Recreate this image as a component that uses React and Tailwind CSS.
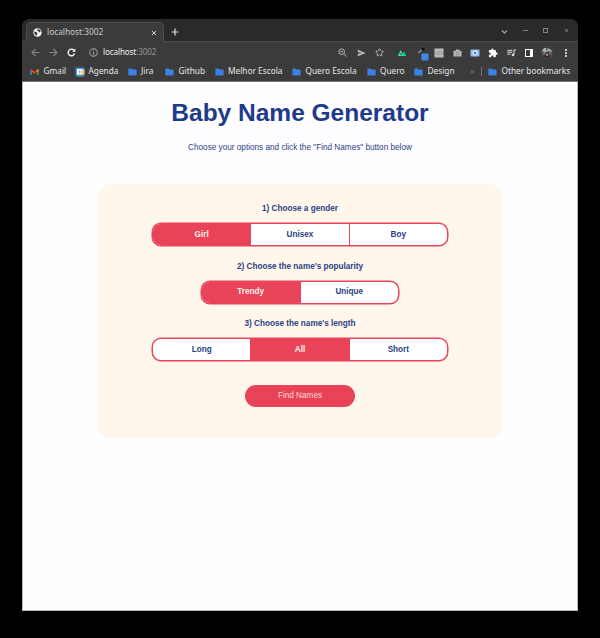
import { Star } from "lucide-react";

const ui = { fill: "none", stroke: "currentColor", strokeWidth: 1.2 };

function Folder() {
  return (
    <svg className="h-[8px] w-[9px]" viewBox="0 0 9 8">
      <path d="M.4 1.3Q.4.5 1.2.5H3.5L4.5 1.4H7.8Q8.6 1.4 8.6 2.2V6.7Q8.6 7.5 7.8 7.5H1.2Q.4 7.5.4 6.7Z" fill="#3b82e8" />
    </svg>
  );
}

function GmailIcon() {
  return (
    <svg className="h-[8px] w-[9px]" viewBox="0 0 9 8">
      <path d="M1.2 7V2" stroke="#4285f4" strokeWidth="1.5" />
      <path d="M7.8 7V2" stroke="#34a853" strokeWidth="1.5" />
      <path d="M.8 1.8L4.5 4.7L8.2 1.8" fill="none" stroke="#ea4335" strokeWidth="1.6" />
      <path d="M7.1 1.7L8.5 1.2V3.1L7.1 4Z" fill="#fbbc04" />
    </svg>
  );
}

function CalendarIcon() {
  return (
    <svg className="h-[10px] w-[10px]" viewBox="0 0 10 10">
      <rect x=".5" y=".5" width="9" height="9" rx="1" fill="#4285f4" />
      <path d="M7.5 2.5H9.5V7.5H7.5Z" fill="#fbbc04" />
      <path d="M2 7.5H7.5V9.5H2Z" fill="#34a853" />
      <path d="M7.5 7.5H9.5L7.5 9.5Z" fill="#ea4335" />
      <rect x="2" y="2" width="5.7" height="5.7" fill="#fff" />
      <path d="M3.5 3.6H4.5V6.5M5.5 3.8L6.2 3.5V6.5" fill="none" stroke="#4285f4" strokeWidth=".6" />
    </svg>
  );
}

function Slot({ children, className = "w-[18px]" }) {
  return <div className={`flex h-full shrink-0 items-center justify-center ${className}`}>{children}</div>;
}

function TabStrip() {
  return (
    <div className="flex h-[23px] shrink-0 items-end border-b border-[#4b4a4b] bg-[#2b2a2b] pl-[4px]">
      <div className="-mb-px flex h-[20px] w-[138px] shrink-0 items-center rounded-t-[5px] border border-b-0 border-[#4e4d4e] bg-[#3c3b3c] pl-[6px] pr-[6px]">
        <svg className="h-[9px] w-[9px] shrink-0" viewBox="0 0 9 9">
          <circle cx="4.5" cy="4.5" r="4.2" fill="#f2f2f2" />
          <path d="M1.1 3.6L3.5 4.1L4.4 5.2L3.8 7.7Q1.4 7 1.1 3.6ZM4.2 1.2L7 1.8L7.8 3.6L6 4.5L5.6 3.2L4.1 2.8Z" fill="#3c3b3c" />
        </svg>
        <span className="ml-[5px] flex-1 text-[8.3px] text-[#c9c9c9]">localhost:3002</span>
        <svg className="h-[6px] w-[6px] text-[#d4d4d4]" viewBox="0 0 6 6" {...ui} strokeWidth="1"><path d="M.8.8L5.2 5.2M5.2.8L.8 5.2" /></svg>
      </div>
      <svg className="mb-[5px] ml-[7px] h-[8px] w-[8px] text-[#dedede]" viewBox="0 0 8 8" {...ui}><path d="M4 .5V7.5M.5 4H7.5" /></svg>
      <div className="ml-auto flex h-full items-center pr-[2px] text-[#a0a0a0]">
        <Slot className="w-[22px]"><svg className="mt-[4px] h-[6px] w-[7px]" viewBox="0 0 7 6" {...ui} strokeWidth="1.3"><path d="M1 1.5L3.5 4L6 1.5" /></svg></Slot>
        <Slot className="w-[20px]"><div className="h-px w-[5px] bg-[#858585]" /></Slot>
        <Slot className="w-[21px]"><div className="h-[5px] w-[5px] border border-[#858585]" /></Slot>
        <Slot className="w-[20px]"><svg className="h-[5px] w-[5px]" viewBox="0 0 5 5" {...ui} strokeWidth=".7"><path d="M.7.7L4.3 4.3M4.3.7L.7 4.3" /></svg></Slot>
      </div>
    </div>
  );
}

function Toolbar() {
  return (
    <div className="flex h-[21px] shrink-0 items-center pl-[4px] pr-[3px] text-[#b8b8b8]">
      <Slot><svg className="h-[9px] w-[9px] text-[#858485]" viewBox="0 0 9 9" {...ui}><path d="M8.5 4.5H1M4.5 1L1 4.5L4.5 8" /></svg></Slot>
      <Slot><svg className="h-[9px] w-[9px] text-[#858485]" viewBox="0 0 9 9" {...ui}><path d="M.5 4.5H8M4.5 1L8 4.5L4.5 8" /></svg></Slot>
      <Slot><svg className="h-[9px] w-[9px] text-[#f2f2f2]" viewBox="0 0 9 9" {...ui} strokeWidth="1.4"><path d="M7.6 5.5A3.3 3.3 0 1 1 7 2.3" /><path d="M8.3.5V3.7H5.1Z" fill="currentColor" stroke="none" /></svg></Slot>
      <svg className="ml-[9px] h-[9px] w-[9px] text-[#a0a0a0]" viewBox="0 0 8 8" {...ui} strokeWidth=".9"><circle cx="4" cy="4" r="3.4" /><path d="M4 3.5V6M4 2V2.8" /></svg>
      <div className="ml-[5px] text-[8.1px] tracking-[-0.12px] text-[#eeeeee]">localhost<span className="text-[#979697]">:3002</span></div>
      <div className="ml-auto flex h-full items-center">
        <Slot className="w-[19px]"><svg className="h-[9px] w-[9px]" viewBox="0 0 9 9" {...ui} strokeWidth="1"><circle cx="3.7" cy="3.7" r="2.8" /><path d="M5.8 5.8L8.5 8.5M2.4 3.7H5" /></svg></Slot>
        <Slot><svg className="h-[8px] w-[9px]" viewBox="0 0 9 8"><path d="M.5.5L8.7 4L.5 7.5L1 4.8L5 4L1 3.2Z" fill="currentColor" /></svg></Slot>
        <Slot><Star className="h-[9px] w-[9px]" strokeWidth={2.5} /></Slot>
        <Slot className="w-[28px]">
          <svg className="h-[8px] w-[10px]" viewBox="0 0 10 8"><path d="M.8 6.9L3.8 1L6.6 6.9Z" fill="#4be0a7" /><path d="M4.2 6.9L6.8 2.4L9.4 6.9Z" fill="#00dc82" /><path d="M2.8 5.8L3.8 3.8L4.8 5.8Z" fill="#3c3b3c" /></svg>
        </Slot>
        <Slot className="w-[14px]">
          <svg className="h-[16px] w-[12px]" viewBox="0 0 12 16"><path d="M1.5 8L5 4.5" stroke="#8b9398" strokeWidth="1.4" /><path d="M4 4L6.5 2.5L8 4L6 6Z" fill="#111" /><rect x="4.5" y="8.5" width="7" height="7" rx="1" fill="#4287ed" /></svg>
        </Slot>
        <Slot><svg className="h-[10px] w-[10px]" viewBox="0 0 10 10"><rect x=".5" y=".5" width="9" height="9" fill="#bcbcbc" /><path d="M3.3 3.2L1.7 5L3.3 6.8M6.7 3.2L8.3 5L6.7 6.8M5.6 2.7L4.4 7.3" fill="none" stroke="#777" strokeWidth=".7" /></svg></Slot>
        <Slot><svg className="h-[8px] w-[9px]" viewBox="0 0 9 8"><path d="M.5 1.7H2.5L3.2.6H5.8L6.5 1.7H8.5V7.5H.5Z" fill="#b8b8b8" /><circle cx="4.5" cy="4.5" r="1.9" fill="#7e7e7e" /><circle cx="4.5" cy="4.5" r="1" fill="#d5d5d5" /></svg></Slot>
        <Slot><svg className="h-[8px] w-[10px]" viewBox="0 0 10 8"><rect x=".5" y=".5" width="9" height="7" rx="1" fill="#8bb8f8" /><circle cx="5" cy="4" r="2.5" fill="#eef5ff" /><path d="M5 2.6V5.4M3.6 4H6.4" stroke="#245fac" strokeWidth="1.1" /></svg></Slot>
        <Slot>
          <svg className="h-[10px] w-[10px] text-white" viewBox="0 0 24 24"><path d="M20.5 11H19V7a2 2 0 0 0-2-2h-4V3.5a2.5 2.5 0 0 0-5 0V5H4a2 2 0 0 0-2 2v3.8h1.5a2.7 2.7 0 0 1 0 5.4H2V20a2 2 0 0 0 2 2h3.8v-1.5a2.7 2.7 0 0 1 5.4 0V22H17a2 2 0 0 0 2-2v-4h1.5a2.5 2.5 0 0 0 0-5Z" fill="currentColor" /></svg>
        </Slot>
        <Slot><svg className="h-[8px] w-[9px] text-[#dedede]" viewBox="0 0 9 8" {...ui} strokeWidth="1"><path d="M.3 1.4H5.3M.3 3.3H5.3M.3 5.2H3.4M7 6V1H9" /><circle cx="5.9" cy="6" r="1.2" fill="currentColor" stroke="none" /></svg></Slot>
        <Slot><div className="h-[8px] w-[8px] border border-r-[3px] border-white" /></Slot>
        <Slot>
          <svg className="h-[12px] w-[12px]" viewBox="0 0 12 12"><circle cx="6" cy="6" r="5.6" fill="#555759" /><path d="M1 4L3 1H5V4L7 1.5L10 3L11 5L7 4L4 5.5Z" fill="#a9afb2" /><path d="M1 7L3 5.5L5 7L7 5L10 7L9 10L6 11.5L3 10Z" fill="#302d31" /><circle cx="3" cy="7" r="1" fill="#bd8781" /><circle cx="6.2" cy="7.8" r="1.1" fill="#d1aca1" /><circle cx="9" cy="6.4" r="1" fill="#a97978" /></svg>
        </Slot>
        <Slot className="w-[19px]"><div className="flex flex-col gap-[1px]"><i className="h-[2px] w-[2px] rounded-full bg-white" /><i className="h-[2px] w-[2px] rounded-full bg-white" /><i className="h-[2px] w-[2px] rounded-full bg-white" /></div></Slot>
      </div>
    </div>
  );
}

function Bookmark({ name, width, icon = <Folder /> }) {
  return (
    <div className={`flex shrink-0 items-center whitespace-nowrap ${width}`}>
      <span className="w-[13.5px] shrink-0">{icon}</span>
      <span>{name}</span>
    </div>
  );
}

function Bookmarks() {
  return (
    <div className="flex h-[19px] shrink-0 items-center border-b border-[#747374] pb-[1px] pl-[8px] text-[8.3px] text-[#e5e5e5]">
      <Bookmark name="Gmail" width="w-[45px]" icon={<GmailIcon />} />
      <Bookmark name="Agenda" width="w-[52.5px]" icon={<CalendarIcon />} />
      <Bookmark name="Jira" width="w-[37.5px]" />
      <Bookmark name="Github" width="w-[49.5px]" />
      <Bookmark name="Melhor Escola" width="w-[77.5px]" />
      <Bookmark name="Quero Escola" width="w-[74.5px]" />
      <Bookmark name="Quero" width="w-[47.5px]" />
      <Bookmark name="Design" width="w-[56px]" />
      <span className="w-[11px] text-[#777677]">»</span>
      <div className="mr-[6px] h-[9px] w-px bg-[#737273]" />
      <Bookmark name="Other bookmarks" width="w-[83px]" />
    </div>
  );
}

function Choice({ title, options, selected, width }) {
  return (
    <section className="flex h-[57.6px] flex-col items-center">
      <h2 className="mb-[9px] h-[10px] text-[8.2px] font-bold leading-[10px]">{title}</h2>
      <div className={`flex h-[23px] overflow-hidden rounded-[9px] border border-[#e9435a] bg-white shadow-[0_0_0_0.5px_#e9435a] ${width}`}>
        {options.map((option, i) => (
          <button
            key={option}
            className={`flex-1 pt-px text-[8.2px] font-bold ${option === selected ? "bg-[#e9435a] text-[#fff1e9]" : ""} ${i ? "border-l border-[#e9435a]" : ""}`}
          >
            {option}
          </button>
        ))}
      </div>
    </section>
  );
}

export default function App() {
  return (
    <div className="h-[638px] w-[600px] overflow-hidden bg-black px-[22px] pt-[19px] font-['Noto_Sans',sans-serif]">
      <div className="flex h-[592px] flex-col overflow-hidden rounded-t-[8px] bg-[#3c3b3c]">
        <TabStrip />
        <Toolbar />
        <Bookmarks />
        <main className="flex flex-1 flex-col items-center border border-t-0 border-[#b7b6b8] bg-[#fefdff] font-['Liberation_Sans',Arial,sans-serif] text-[#2b3f83]">
          <h1 className="mt-[16px] h-[30px] text-[24.5px] font-bold leading-[30px] text-[#1e3a8a]">Baby Name Generator</h1>
          <p className="mt-[15px] h-[10px] text-[8.2px] leading-[10px]">Choose your options and click the "Find Names" button below</p>
          <div className="mt-[31px] flex h-[254px] w-[404px] flex-col items-center rounded-[13px] bg-[#fff7ec] pt-[20px]">
            <Choice title="1) Choose a gender" options={["Girl", "Unisex", "Boy"]} selected="Girl" width="w-[296px]" />
            <Choice title="2) Choose the name's popularity" options={["Trendy", "Unique"]} selected="Trendy" width="w-[198px]" />
            <Choice title="3) Choose the name's length" options={["Long", "All", "Short"]} selected="All" width="w-[296px]" />
            <button className="mt-[8px] h-[22px] w-[110px] rounded-full bg-[#e9435a] text-[8.2px] text-[#ffd9d5]">Find Names</button>
          </div>
        </main>
      </div>
    </div>
  );
}
